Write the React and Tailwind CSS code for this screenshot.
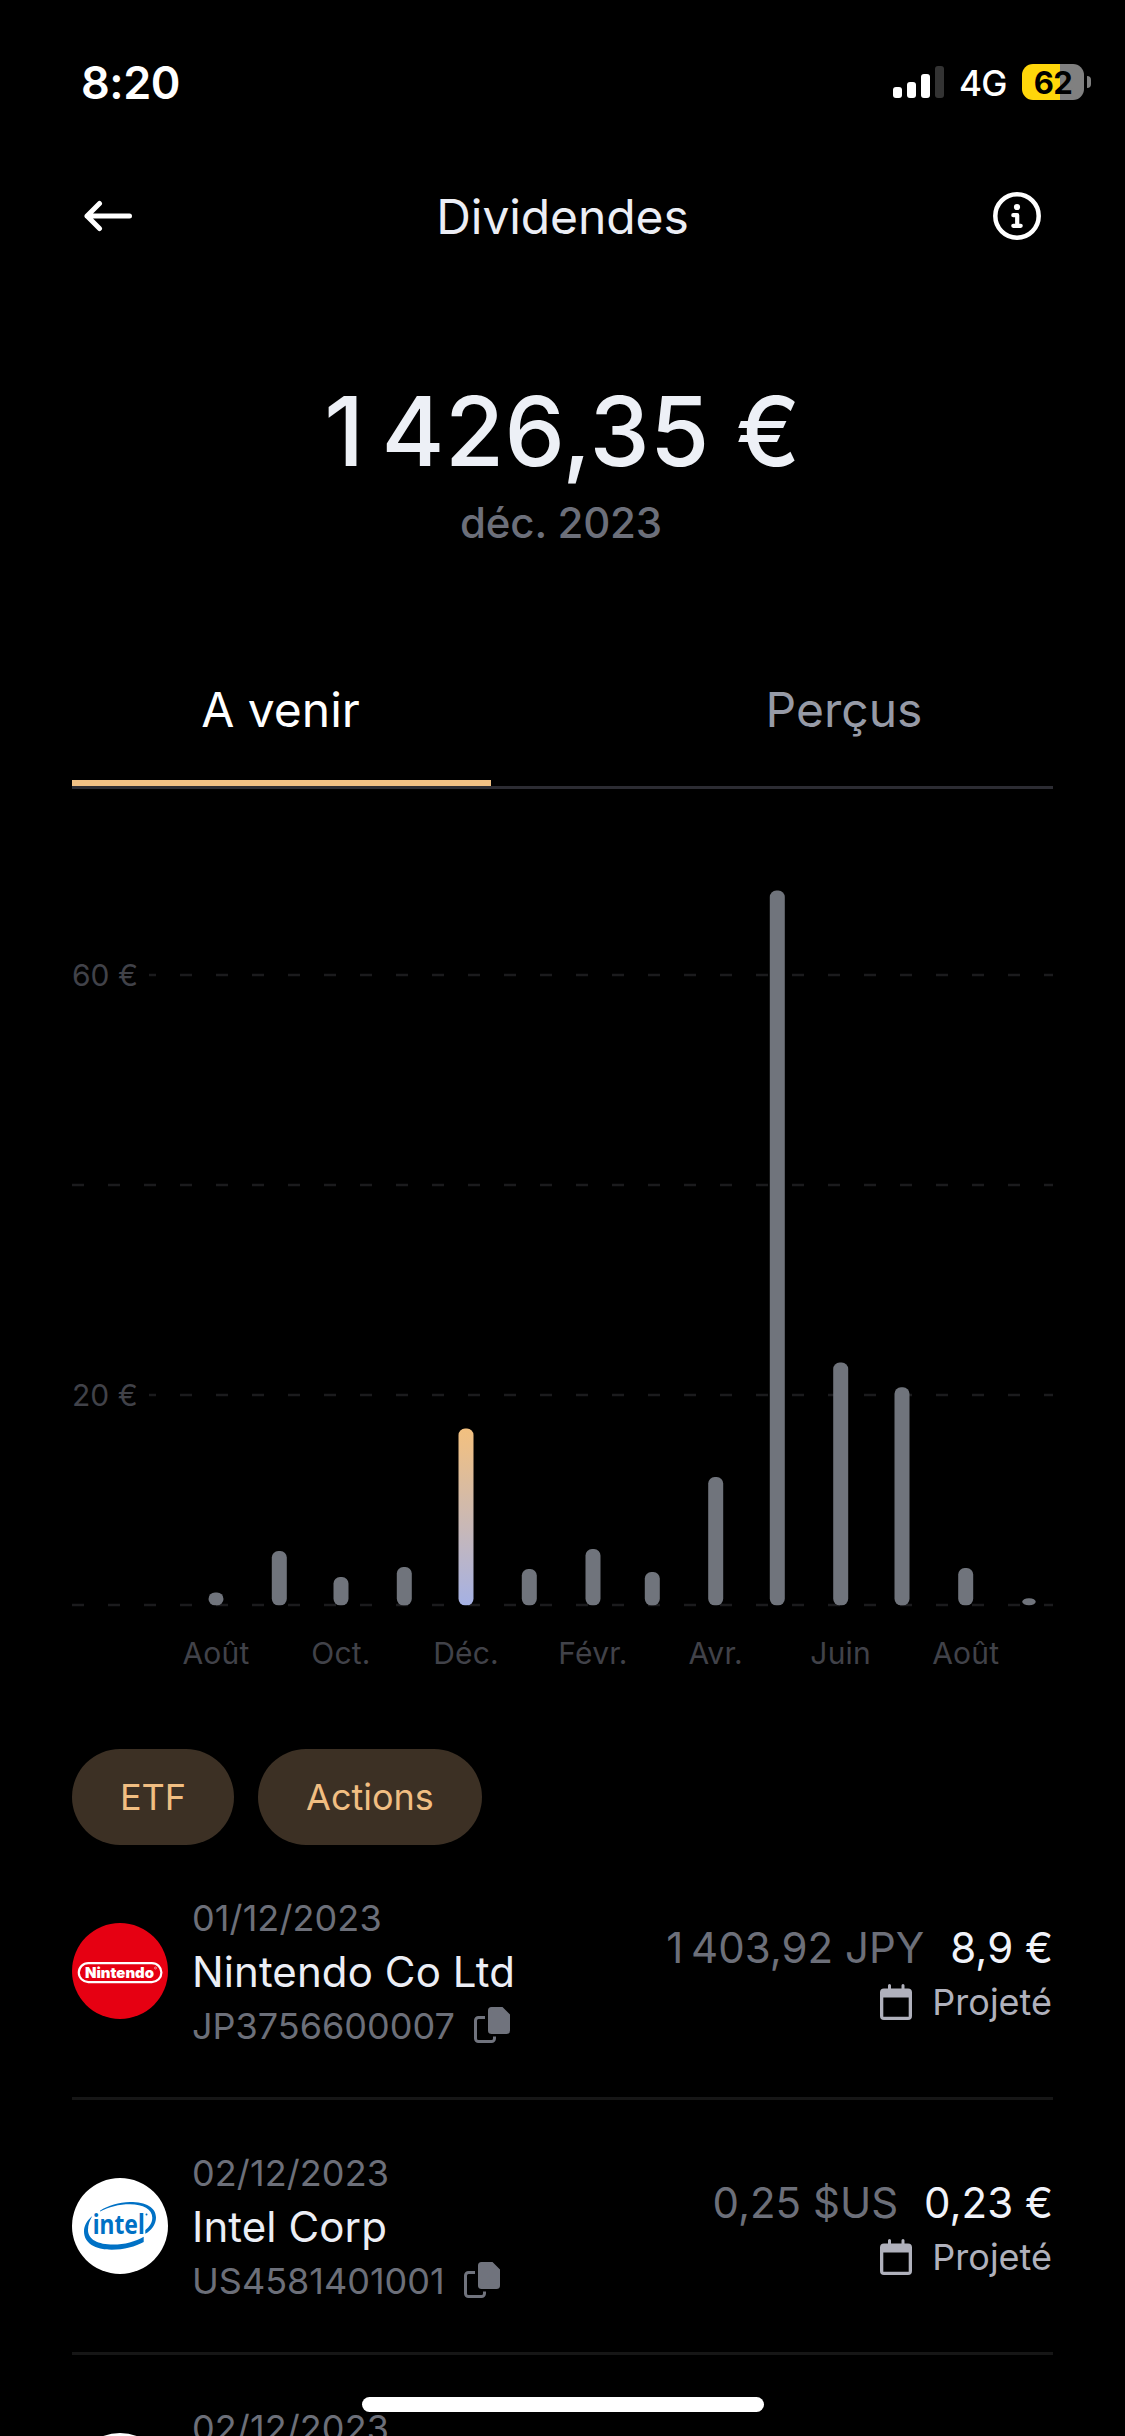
import React from 'react';

const bars = [
  { x: 216, top: 1592.5 },
  { x: 279.3, top: 1551 },
  { x: 341, top: 1577 },
  { x: 404.3, top: 1567 },
  { x: 466, top: 1428.5, active: true },
  { x: 529.3, top: 1569 },
  { x: 593, top: 1549 },
  { x: 652.3, top: 1572 },
  { x: 715.7, top: 1477 },
  { x: 777.3, top: 890.5 },
  { x: 840.7, top: 1362.5 },
  { x: 902, top: 1387.3 },
  { x: 965.7, top: 1568 },
  { x: 1029, top: 1598.3, width: 13.5 },
];

const months = [
  { x: 216, label: 'Août' },
  { x: 341, label: 'Oct.' },
  { x: 466, label: 'Déc.' },
  { x: 593, label: 'Févr.' },
  { x: 715.7, label: 'Avr.' },
  { x: 840.7, label: 'Juin' },
  { x: 965.7, label: 'Août' },
];

const gridLines = [
  { y: 975, label: '60 €' },
  { y: 1185 },
  { y: 1395, label: '20 €' },
  { y: 1605 },
];

const dividends = [
  { date: '01/12/2023', name: 'Nintendo Co Ltd', isin: 'JP3756600007', amount: '1\u2009403,92 JPY', value: '8,9 €', logo: <NintendoLogo /> },
  { date: '02/12/2023', name: 'Intel Corp', isin: 'US4581401001', amount: '0,25 $US', value: '0,23 €', logo: <IntelLogo /> },
  { date: '02/12/2023', name: '', isin: '', amount: '', value: '', logo: <BlankLogo /> },
];

function NintendoLogo() {
  return (
    <svg viewBox="0 0 96 96" className="w-24 h-24 shrink-0">
      <circle cx="48" cy="48" r="48" fill="#e60012" />
      <rect x="6.8" y="40.1" width="82.6" height="19" rx="9.5" fill="none" stroke="#fff" strokeWidth="2.2" />
      <text x="13" y="55" textLength="69" lengthAdjust="spacingAndGlyphs" fill="#fff" className="font-[Inter] font-black text-[14.5px]">Nintendo</text>
      <circle cx="83.5" cy="45" r="1" fill="none" stroke="#fff" strokeWidth="0.5" />
    </svg>
  );
}

function IntelLogo() {
  return (
    <svg viewBox="0 0 96 96" className="w-24 h-24 shrink-0">
      <circle cx="48" cy="48" r="48" fill="#fff" />
      <g fill="#0071c5">
        <path d="M28 32.7C36 27.5 47 24 58 24C74 24 84 29.5 84 39.5C84 46.5 79.5 52.3 73.3 55.8V52C77.5 49 80.3 44.5 80.3 39.8C80.3 31 71 26.2 58 26.2C47 26.2 36.5 28.8 28 33.5Z" />
        <path d="M20.3 38C15 42.5 12 47.5 12 53.5C12 65 23 71.7 39.7 71.7C51.5 71.7 64 68.5 71.7 64V58.7C63.5 63.5 52.5 66.6 41.3 66.6C26 66.6 16 61.5 16 52C16 47 17.6 42.5 20.3 38Z" />
        <text x="20.8" y="56" textLength="52" lengthAdjust="spacingAndGlyphs" className="font-['Noto_Sans'] font-bold text-[27px]">intel</text>
        <circle cx="74.5" cy="36.5" r="1" />
      </g>
    </svg>
  );
}

function BlankLogo() {
  return <div className="w-24 h-24 shrink-0 rounded-full bg-white" />;
}

function CopyIcon() {
  return (
    <svg viewBox="0 0 36 36" className="w-9 h-9">
      <path d="M17.5 0h11L36 7.5V23.5a3.5 3.5 0 0 1-3.5 3.5h-15a3.5 3.5 0 0 1-3.5-3.5v-20A3.5 3.5 0 0 1 17.5 0Z" fill="#70737d" />
      <path d="M11 10.5H4.5a3 3 0 0 0-3 3v18a3 3 0 0 0 3 3h13a3 3 0 0 0 3-3v-2" fill="none" stroke="#70737d" strokeWidth="3" />
    </svg>
  );
}

function CalendarIcon() {
  return (
    <svg viewBox="0 0 32 36" className="w-8 h-9">
      <path fillRule="evenodd" fill="#b0b1bc" d="M8 1.5a1.5 1.5 0 0 1 3 0V4.5h10.5V1.5a1.5 1.5 0 0 1 3 0V4.5H28A4 4 0 0 1 32 8.5V32a4 4 0 0 1-4 4H4a4 4 0 0 1-4-4V8.5A4 4 0 0 1 4 4.5H8ZM3.3 13.5V32.7H28.7V13.5Z" />
    </svg>
  );
}

function StatusBar() {
  return (
    <div className="h-[164px] shrink-0 pl-[81px] pr-[34px] flex items-center justify-between">
      <div className="text-[45px] leading-none font-semibold text-white tracking-[-0.5px]">8:20</div>
      <div className="flex items-center">
        <div className="flex items-end gap-[4.7px] h-8">
          <div className="w-[9.3px] h-[11px] rounded-[3px] bg-white" />
          <div className="w-[9.3px] h-4 rounded-[3px] bg-white" />
          <div className="w-[9.3px] h-6 rounded-[3px] bg-white" />
          <div className="w-[9.3px] h-8 rounded-[3px] bg-[#333]" />
        </div>
        <div className="ml-[15px] w-[48px] pt-[3px] text-[35px] leading-none font-medium text-white tracking-[-0.8px]">4G</div>
        <div className="ml-[15px] w-[62px] h-9 rounded-[11px] overflow-hidden flex items-center justify-center bg-linear-to-r from-[#ffd60a] from-[61.5%] to-[#808080] to-[61.5%]">
          <span className="text-[31px] leading-none font-bold text-black tracking-[-0.5px]">62</span>
        </div>
        <div className="ml-[3px] w-1 h-3 rounded-r-full bg-[#808080]" />
      </div>
    </div>
  );
}

function Header() {
  return (
    <div className="h-[104px] shrink-0 px-[84px] flex items-center justify-between">
      <svg viewBox="0 0 48 32" className="w-12 h-8" fill="none" stroke="#fff" strokeWidth="5" strokeLinecap="round" strokeLinejoin="round">
        <path d="M45.5 16H3M15.5 3.5L3 16L15.5 28.5" />
      </svg>
      <h1 className="pt-[2px] text-[48px] leading-none font-normal text-[#eceef5] tracking-[-0.1px]">Dividendes</h1>
      <svg viewBox="0 0 48 48" className="w-12 h-12" fill="none" stroke="#fff" strokeWidth="4.5" strokeLinecap="round" strokeLinejoin="round">
        <circle cx="24" cy="24" r="21.7" />
        <path d="M20.3 23.2H24.2V33.8M20.3 33.8H27.7" strokeWidth="4.2" />
        <circle cx="24" cy="15" r="3.1" fill="#fff" stroke="none" />
      </svg>
    </div>
  );
}

function Tabs() {
  return (
    <div className="mx-[72px] h-[157px] shrink-0 flex justify-between border-b-3 border-[#2c2c33] text-[48px] leading-none">
      <div className="w-[419px] flex items-start justify-center pt-[54px] pr-[2px] border-b-6 border-[#f0c084] text-white">A venir</div>
      <div className="w-[417px] flex items-start justify-center pt-[54px] pr-px text-[#969aa6]">Perçus</div>
    </div>
  );
}

function Chart() {
  return (
    <svg viewBox="0 789 1125 960" className="block w-[1125px] h-[960px] shrink-0">
      <defs>
        <linearGradient id="active" x1="0" y1="0" x2="0" y2="1">
          <stop offset="0" stopColor="#f2c080" />
          <stop offset="0.1" stopColor="#ecbf88" />
          <stop offset="1" stopColor="#a5b1e4" />
        </linearGradient>
      </defs>
      {gridLines.map((line) => (
        <g key={line.y}>
          <path d={`M72 ${line.y}H1053`} stroke="#1b1b1d" strokeWidth="2.5" strokeDasharray="12 24" />
          {line.label && <rect x="72" y={line.y - 18} width="77" height="36" fill="#000" />}
          {line.label && <text x="72" y={line.y + 11} fill="#414249" className="text-[30px]">{line.label}</text>}
        </g>
      ))}
      {bars.map((bar) => {
        const width = bar.width || 15;
        return (
          <rect
            key={bar.x}
            x={bar.x - width / 2}
            y={bar.top}
            width={width}
            height={1605.3 - bar.top}
            rx="6.5"
            fill={bar.active ? 'url(#active)' : '#70747c'}
          />
        );
      })}
      {months.map((month) => (
        <text key={month.x} x={month.x} y="1664" textAnchor="middle" fill="#414249" className="text-[30px] tracking-[0.2px]">{month.label}</text>
      ))}
    </svg>
  );
}

function DividendRow({ item }) {
  return (
    <div className="h-[255px] shrink-0 flex items-center border-b-3 border-[#161616]">
      {item.logo}
      <div className="ml-6 pt-[2px] flex-1 text-[36px] leading-[54px] text-[#6c6f79]">
        <div className="tracking-[0.1px]">{item.date}</div>
        <div className="h-[54px] text-[42px] text-[#eceef5] tracking-[0.1px]">{item.name}</div>
        <div className="h-[54px] flex items-center">
          <span>{item.isin}</span>
          {item.isin && <span className="ml-[19px] pb-[2px]"><CopyIcon /></span>}
        </div>
      </div>
      {item.value && (
        <div className="pt-2 flex flex-col items-end leading-[54px]">
          <div className="flex gap-[26px] text-[42px]">
            <span className="text-[#6c6f79]">{item.amount}</span>
            <span className="text-[#f1f3fa]">{item.value}</span>
          </div>
          <div className="pr-px flex items-center gap-5 text-[36px] text-[#b0b1bc]">
            <CalendarIcon />
            <span>Projeté</span>
          </div>
        </div>
      )}
    </div>
  );
}

function App() {
  return (
    <div className="relative w-[1125px] h-[2436px] overflow-hidden flex flex-col bg-black font-[Inter,sans-serif]">
      <StatusBar />
      <Header />
      <div className="h-[364px] shrink-0 pt-[115px] flex flex-col items-center">
        <div className="text-[96px] leading-24 font-medium text-[#edf0f6] tracking-[0.4px]">{'1\u2009426,35 €'}</div>
        <div className="mt-[23px] pr-[3px] text-[42px] leading-[42px] font-medium text-[#6c6f7a] tracking-[-0.2px]">déc. 2023</div>
      </div>
      <Tabs />
      <Chart />
      <div className="px-[72px] flex shrink-0 gap-6 text-[36px] text-[#f1be82]">
        <button className="w-[162px] h-24 rounded-full bg-[#3c3024]">ETF</button>
        <button className="w-[224px] h-24 rounded-full bg-[#3c3024]">Actions</button>
      </div>
      <div className="px-[72px] flex shrink-0 flex-col">
        {dividends.map((item, i) => (
          <DividendRow key={i} item={item} />
        ))}
      </div>
      <div className="absolute left-[362px] top-[2397px] w-[402px] h-[15px] rounded-full bg-white" />
    </div>
  );
}

export default App;
